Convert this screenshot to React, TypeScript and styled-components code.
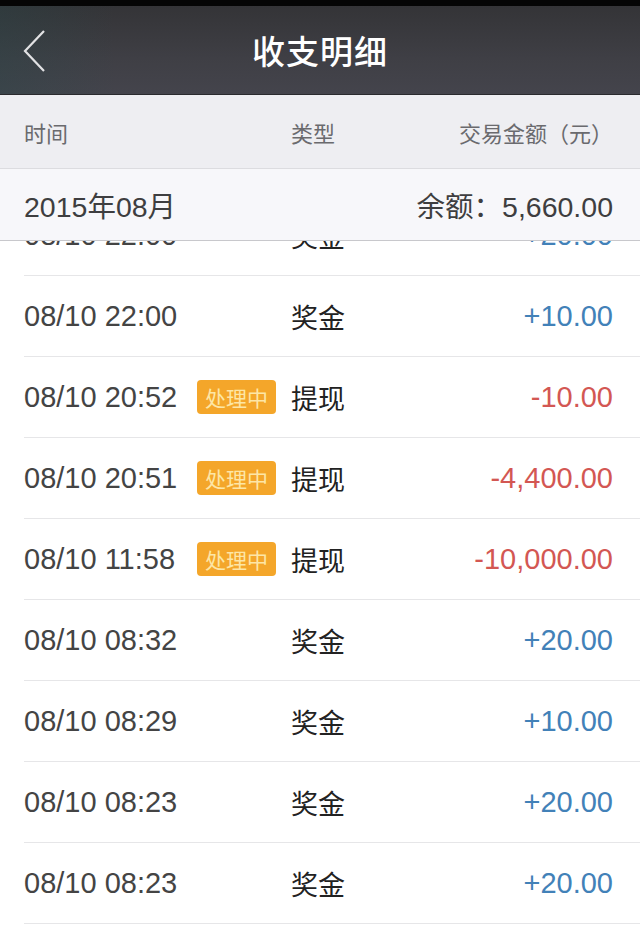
import * as React from 'react'
import styled, { createGlobalStyle } from 'styled-components'

interface Record {
  time: string
  type: string
  amount: number
  pending?: boolean
}

const records: Record[] = [
  { time: '08/10 22:00', type: '奖金', amount: 20 },
  { time: '08/10 22:00', type: '奖金', amount: 10 },
  { time: '08/10 20:52', type: '提现', amount: -10, pending: true },
  { time: '08/10 20:51', type: '提现', amount: -4400, pending: true },
  { time: '08/10 11:58', type: '提现', amount: -10000, pending: true },
  { time: '08/10 08:32', type: '奖金', amount: 20 },
  { time: '08/10 08:29', type: '奖金', amount: 10 },
  { time: '08/10 08:23', type: '奖金', amount: 20 },
  { time: '08/10 08:23', type: '奖金', amount: 20 },
  { time: '08/10 08:15', type: '奖金', amount: 10 },
]

const formatAmount = (n: number) => {
  const sign = n > 0 ? '+' : '-'
  const abs = Math.abs(n).toLocaleString('en-US', { minimumFractionDigits: 2, maximumFractionDigits: 2 })
  return sign + abs
}

const GlobalStyle = createGlobalStyle`
  html, body {
    margin: 0;
    padding: 0;
    background: #fff;
    font-family: 'Liberation Sans', 'Noto Sans CJK SC', sans-serif;
  }
`

const Screen = styled.div`
  width: 640px;
  height: 931px;
  display: flex;
  flex-direction: column;
  overflow: hidden;
  background: #fff;
`

const StatusStrip = styled.div`
  height: 6px;
  background: #050505;
`

const NavBar = styled.div`
  height: 88px;
  display: flex;
  align-items: center;
  justify-content: center;
  position: relative;
  background:
    linear-gradient(90deg, rgba(40, 70, 72, 0.35) 0%, rgba(40, 70, 72, 0) 18%),
    linear-gradient(180deg, #343437 0%, #3f3f45 60%, #44444c 100%);
  border-bottom: 1px solid #2a2a2e;
`

const BackButton = styled.div`
  position: absolute;
  left: 22px;
  top: 22px;
  width: 26px;
  height: 44px;
`

const Title = styled.h1`
  margin: 0;
  color: #fff;
  font-family: 'Noto Sans CJK SC', sans-serif;
  font-size: 33px;
  font-weight: 500;
  letter-spacing: 1px;
`

const HeaderRow = styled.div`
  height: 73px;
  display: grid;
  grid-template-columns: 267px 1fr auto;
  align-items: center;
  padding: 0 27px 0 24px;
  background: #eeeef2;
  border-bottom: 1px solid #dcdce0;
  color: #6a6a6e;
  font-family: 'Noto Sans CJK SC', sans-serif;
  font-size: 22px;
`

const MonthRow = styled.div`
  height: 71px;
  display: flex;
  align-items: center;
  justify-content: space-between;
  padding: 0 27px 0 24px;
  background: #f7f7fa;
  border-bottom: 1px solid #c8c8cc;
  color: #3e3e40;
  font-size: 28.5px;
  position: relative;
  z-index: 1;
`

const ListViewport = styled.div`
  flex: 1;
  overflow: hidden;
`

const List = styled.div`
  margin-top: -46px;
`

const Row = styled.div`
  padding-left: 24px;
`

const RowInner = styled.div`
  height: 80px;
  display: grid;
  grid-template-columns: 173px 94px 1fr auto;
  align-items: center;
  padding-right: 27px;
  border-bottom: 1px solid #e6e6e8;
  font-size: 29px;
`

const Time = styled.span`
  color: #444;
`

const TypeText = styled.span`
  color: #222;
  font-family: 'Noto Sans CJK SC', sans-serif;
  font-size: 27px;
`

const Amount = styled.span<{ $positive: boolean }>`
  color: ${(p) => (p.$positive ? '#4281b8' : '#d35753')};
  text-align: right;
`

const Badge = styled.span`
  justify-self: start;
  width: 79px;
  height: 34px;
  display: flex;
  align-items: center;
  justify-content: center;
  border-radius: 4px;
  background: #f4a62a;
  color: #fde6a6;
  font-family: 'Noto Sans CJK SC', sans-serif;
  font-size: 21px;
`

const ChevronLeft = () => (
  <svg width="26" height="44" viewBox="0 0 26 44">
    <polyline points="22,3 3,23 22,43" fill="none" stroke="#e2e2e4" strokeWidth="2.2" />
  </svg>
)

const App = () => {
  return (
    <Screen>
      <GlobalStyle />
      <StatusStrip />
      <NavBar>
        <BackButton>
          <ChevronLeft />
        </BackButton>
        <Title>收支明细</Title>
      </NavBar>
      <HeaderRow>
        <span>时间</span>
        <span>类型</span>
        <span>交易金额（元）</span>
      </HeaderRow>
      <MonthRow>
        <span>2015年08月</span>
        <span>余额：5,660.00</span>
      </MonthRow>
      <ListViewport>
        <List>
          {records.map((r, i) => (
            <Row key={i}>
              <RowInner>
                <Time>{r.time}</Time>
                <div>{r.pending ? <Badge>处理中</Badge> : null}</div>
                <TypeText>{r.type}</TypeText>
                <Amount $positive={r.amount > 0}>{formatAmount(r.amount)}</Amount>
              </RowInner>
            </Row>
          ))}
        </List>
      </ListViewport>
    </Screen>
  )
}

export default App
